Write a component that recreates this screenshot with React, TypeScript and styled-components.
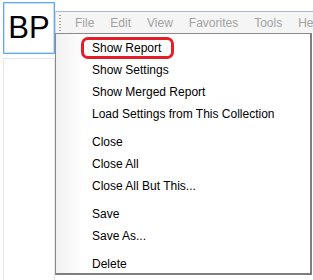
import React from "react";
import styled, { createGlobalStyle } from "styled-components";

const GlobalStyle = createGlobalStyle`
  html, body {
    margin: 0;
    padding: 0;
    background: #ffffff;
    overflow: hidden;
  }
  body {
    font-family: "Liberation Sans", Arial, sans-serif;
  }
`;

type Entry = { label: string; highlight?: boolean } | "sep";

const menuBarItems = ["File", "Edit", "View", "Favorites", "Tools", "Help"];

const fileMenu: Entry[] = [
  { label: "Show Report", highlight: true },
  { label: "Show Settings" },
  { label: "Show Merged Report" },
  { label: "Load Settings from This Collection" },
  "sep",
  { label: "Close" },
  { label: "Close All" },
  { label: "Close All But This..." },
  "sep",
  { label: "Save" },
  { label: "Save As..." },
  "sep",
  { label: "Delete" },
];

const App: React.FC = () => {
  return (
    <>
      <GlobalStyle />
      <Page>
        <TileColumn>
          <Tile $active>BP</Tile>
          <Tile />
        </TileColumn>
        <Workspace>
          <MenuBar>
            <Grip />
            {menuBarItems.map((item) => (
              <MenuBarItem key={item}>{item}</MenuBarItem>
            ))}
          </MenuBar>
          <Dropdown>
            {fileMenu.map((entry, i) =>
              entry === "sep" ? (
                <Separator key={i} />
              ) : (
                <MenuItem key={i}>
                  <Label $highlight={entry.highlight}>{entry.label}</Label>
                </MenuItem>
              )
            )}
          </Dropdown>
        </Workspace>
      </Page>
    </>
  );
};

const Page = styled.div`
  display: flex;
  width: 313px;
  height: 280px;
  overflow: hidden;
`;

const TileColumn = styled.div`
  display: flex;
  flex-direction: column;
  gap: 4px;
  padding: 2px 0 0 3px;
  width: 52px;
  flex-shrink: 0;
`;

const Tile = styled.div<{ $active?: boolean }>`
  width: 52px;
  height: ${(p) => (p.$active ? "52px" : "230px")};
  flex-shrink: 0;
  box-sizing: border-box;
  display: flex;
  align-items: center;
  justify-content: center;
  font-family: "Liberation Sans", Arial, sans-serif;
  font-size: 31px;
  color: #000;
  background: #fff;
  border: 1px solid ${(p) => (p.$active ? "#62a8ee" : "#e6e6e6")};
  box-shadow: ${(p) => (p.$active ? "inset 0 0 0 1px #c4e0fa" : "none")};
`;

const Workspace = styled.div`
  position: relative;
  flex: 1;
  min-width: 0;
  padding-top: 11px;
`;

const MenuBar = styled.div`
  height: 22px;
  box-sizing: border-box;
  display: flex;
  align-items: center;
  background: #f5f5f5;
  border-top: 1px solid #a9bacb;
  border-left: 1px solid #d8d8d8;
  padding-left: 3px;
  white-space: nowrap;
  overflow: hidden;
`;

const Grip = styled.div`
  width: 2px;
  height: 18px;
  flex-shrink: 0;
  margin-right: 6px;
  background-image: radial-gradient(circle, #a0a0a0 0.8px, transparent 1px);
  background-size: 2px 3px;
`;

const MenuBarItem = styled.div`
  flex-shrink: 0;
  padding: 0 8px;
  font-size: 12px;
  color: #a2a2a2;
  line-height: 20px;
`;

const Dropdown = styled.div`
  position: absolute;
  left: 0;
  top: 33px;
  width: 257px;
  height: 242px;
  box-sizing: border-box;
  padding: 3px 2px 0 0;
  background: linear-gradient(to right, #f1f1f1 0, #fbfbfb 22px, #ffffff 26px);
  border: 1px solid #8a8a8a;
  border-right: 2px solid #7e7e7e;
  border-bottom: 2px solid #7e7e7e;
  display: flex;
  flex-direction: column;
`;

const MenuItem = styled.div`
  height: 22px;
  display: flex;
  align-items: center;
  padding-left: 36px;
  font-size: 12px;
  color: #000;
`;

const Label = styled.span<{ $highlight?: boolean }>`
  position: relative;
  line-height: 22px;
  &::after {
    content: "";
    display: ${(p) => (p.$highlight ? "block" : "none")};
    position: absolute;
    left: -11px;
    right: -13px;
    top: 0;
    bottom: 0;
    border: 3px solid #e41e26;
    border-radius: 7px;
  }
`;

const Separator = styled.div`
  height: 1px;
  margin: 2px 1px 3px 32px;
  background: #c8c8c8;
  border-bottom: 1px solid #ffffff;
`;

export default App;
